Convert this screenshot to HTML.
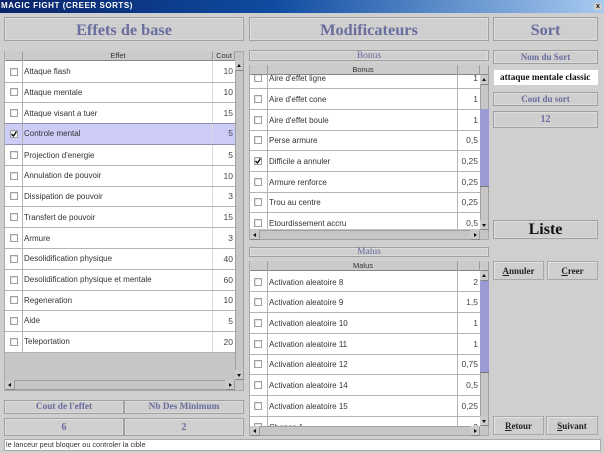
<!DOCTYPE html>
<html><head><meta charset="utf-8"><style>
html,body{margin:0;padding:0}
body{width:604px;height:453px;overflow:hidden;background:#cfcfcf;position:relative;font-family:"Liberation Sans",sans-serif;filter:blur(.35px)}
div{position:absolute;box-sizing:border-box}
.b{border:1px solid #a0a0a0;box-shadow:inset 1px 1px 0 #dedede,inset -1px -1px 0 #dadada;background:#cfcfcf;text-align:center;font-family:"Liberation Serif",serif;font-weight:bold;color:#6a6d9e}
.hd{background:#cbcbcb;border:1px solid #cbcbcb;border-bottom-color:#858585;border-right-color:#9a9a9a;font-size:7.5px;line-height:8px;text-align:center;color:#333}
.w{background:#fff}
.l{font-size:8px;line-height:10px;color:#333;white-space:nowrap}
.m{margin-top:1px}
.n{font-size:8.5px;line-height:10px;color:#444;text-align:right;white-space:nowrap}
.c{width:8px;height:8px;border:1px solid #a0a0a0;background:#fff;box-shadow:inset 1px 1px 0 #e4e4e4}
.line{background:#b4b4b4}
.sb{background:#c6c6c6;border:1px solid #a0a0a0}
.btn{border:1px solid #a8a8a8;box-shadow:inset 1px 1px 0 #e4e4e4;color:#222;text-align:center;font-family:"Liberation Serif",serif;font-weight:bold;font-size:9px}
.t{width:0;height:0}
</style></head><body>

<div style="left:0;top:0;width:604px;height:13px;background:linear-gradient(90deg,#0a246a,#0f4ba0 45%,#a6caf0);color:#fff;font:bold 8px/12px 'Liberation Sans',sans-serif;padding-left:1px;letter-spacing:.55px;white-space:nowrap">MAGIC FIGHT (CREER SORTS)</div>
<div style="left:594px;top:3px;width:8px;height:7px;background:#cfcfcf;font:bold 7px/7px 'Liberation Sans',sans-serif;text-align:center;color:#111">x</div>

<div class="b" style="left:4px;top:17px;width:240px;height:24px;font-size:16.3px;line-height:23px">Effets de base</div>
<div class="b" style="left:249px;top:17px;width:240px;height:24px;font-size:16.3px;line-height:23px">Modificateurs</div>
<div class="b" style="left:493px;top:17px;width:105px;height:24px;font-size:16.3px;line-height:23px">Sort</div>

<!-- LEFT TABLE -->
<div style="left:4px;top:51px;width:240px;height:340px;background:#c6c6c6;border:1px solid #aaa"></div>
<div class="hd" style="left:5px;top:51px;width:18px;height:10px"></div>
<div class="hd" style="left:23px;top:51px;width:190px;height:10px">Effet</div>
<div class="hd" style="left:213px;top:51px;width:22px;height:10px">Cout</div>
<div class="w" style="left:5px;top:61px;width:230px;height:291px"></div>
<div style="left:5px;top:124px;width:230px;height:20px;background:#ccccf6"></div>
<div class="line" style="left:22px;top:61px;width:1px;height:291px"></div>
<div class="line" style="left:212px;top:61px;width:1px;height:291px;background:#d8d8d8"></div>
<div class="line" style="left:5px;top:82px;width:230px;height:1px"></div>
<div class="line" style="left:5px;top:102px;width:230px;height:1px"></div>
<div class="line" style="left:5px;top:123px;width:230px;height:1px;background:#8f8fb5"></div>
<div class="line" style="left:5px;top:144px;width:230px;height:1px;background:#8f8fb5"></div>
<div class="line" style="left:5px;top:165px;width:230px;height:1px"></div>
<div class="line" style="left:5px;top:186px;width:230px;height:1px"></div>
<div class="line" style="left:5px;top:206px;width:230px;height:1px"></div>
<div class="line" style="left:5px;top:227px;width:230px;height:1px"></div>
<div class="line" style="left:5px;top:248px;width:230px;height:1px"></div>
<div class="line" style="left:5px;top:269px;width:230px;height:1px"></div>
<div class="line" style="left:5px;top:290px;width:230px;height:1px"></div>
<div class="line" style="left:5px;top:310px;width:230px;height:1px"></div>
<div class="line" style="left:5px;top:331px;width:230px;height:1px"></div>
<div class="line" style="left:5px;top:352px;width:230px;height:1px"></div>

<div class="c" style="left:10px;top:68px"></div><div class="l" style="left:24px;top:67px">Attaque flash</div><div class="n" style="left:205px;top:66px;width:28px">10</div>
<div class="c" style="left:10px;top:88px"></div><div class="l" style="left:24px;top:88px">Attaque mentale</div><div class="n" style="left:205px;top:87px;width:28px">10</div>
<div class="c" style="left:10px;top:109px"></div><div class="l" style="left:24px;top:109px">Attaque visant a tuer</div><div class="n" style="left:205px;top:108px;width:28px">15</div>
<div class="c" style="left:10px;top:130px"><svg width="6" height="6" style="display:block"><path d="M0.5 3L2.5 5L5.5 0.5" stroke="#111" stroke-width="1.4" fill="none"/></svg></div><div class="l" style="left:24px;top:129px">Controle mental</div><div class="n" style="left:205px;top:128px;width:28px">5</div>
<div class="c" style="left:10px;top:151px"></div><div class="l" style="left:24px;top:151px">Projection d'energie</div><div class="n" style="left:205px;top:150px;width:28px">5</div>
<div class="c" style="left:10px;top:172px"></div><div class="l" style="left:24px;top:171px">Annulation de pouvoir</div><div class="n" style="left:205px;top:171px;width:28px">10</div>
<div class="c" style="left:10px;top:192px"></div><div class="l" style="left:24px;top:192px">Dissipation de pouvoir</div><div class="n" style="left:205px;top:191px;width:28px">3</div>
<div class="c" style="left:10px;top:213px"></div><div class="l" style="left:24px;top:213px">Transfert de pouvoir</div><div class="n" style="left:205px;top:212px;width:28px">15</div>
<div class="c" style="left:10px;top:234px"></div><div class="l" style="left:24px;top:234px">Armure</div><div class="n" style="left:205px;top:233px;width:28px">3</div>
<div class="c" style="left:10px;top:255px"></div><div class="l" style="left:24px;top:254px">Desolidification physique</div><div class="n" style="left:205px;top:254px;width:28px">40</div>
<div class="c" style="left:10px;top:276px"></div><div class="l" style="left:24px;top:275px">Desolidification physique et mentale</div><div class="n" style="left:205px;top:275px;width:28px">60</div>
<div class="c" style="left:10px;top:296px"></div><div class="l" style="left:24px;top:296px">Regeneration</div><div class="n" style="left:205px;top:295px;width:28px">10</div>
<div class="c" style="left:10px;top:317px"></div><div class="l" style="left:24px;top:316px">Aide</div><div class="n" style="left:205px;top:316px;width:28px">5</div>
<div class="c" style="left:10px;top:338px"></div><div class="l" style="left:24px;top:337px">Teleportation</div><div class="n" style="left:205px;top:337px;width:28px">20</div>

<div class="sb" style="left:235px;top:61px;width:9px;height:319px"></div>
<div class="hd" style="left:235px;top:61px;width:9px;height:10px"></div>
<div class="t" style="left:237px;top:64px;border:2.5px solid transparent;border-bottom:3px solid #111;border-top:0"></div>
<div class="hd" style="left:235px;top:370px;width:9px;height:10px"></div>
<div class="t" style="left:237px;top:374px;border:2.5px solid transparent;border-top:3px solid #111;border-bottom:0"></div>
<div class="sb" style="left:5px;top:380px;width:230px;height:10px"></div>
<div class="hd" style="left:5px;top:380px;width:10px;height:10px"></div>
<div class="t" style="left:8px;top:383px;border:2.5px solid transparent;border-right:3px solid #111;border-left:0"></div>
<div class="hd" style="left:225px;top:380px;width:10px;height:10px"></div>
<div class="t" style="left:229px;top:383px;border:2.5px solid transparent;border-left:3px solid #111;border-right:0"></div>

<div class="b" style="left:4px;top:400px;width:120px;height:14px;font-size:9.3px;line-height:13px">Cout de l'effet</div>
<div class="b" style="left:124px;top:400px;width:120px;height:14px;font-size:9.3px;line-height:13px">Nb Des Minimum</div>
<div class="b" style="left:4px;top:418px;width:120px;height:18px;font-size:10px;line-height:17px">6</div>
<div class="b" style="left:124px;top:418px;width:120px;height:18px;font-size:10px;line-height:17px">2</div>

<!-- BONUS -->
<div class="b" style="left:249px;top:50px;width:240px;height:11px;font-size:9.5px;line-height:10px;font-weight:normal">Bonus</div>
<div style="left:249px;top:65px;width:240px;height:175px;background:#c6c6c6;border:1px solid #aaa"></div>
<div class="w" style="left:250px;top:74px;width:230px;height:155px"></div>
<div class="line" style="left:267px;top:74px;width:1px;height:155px"></div>
<div class="line" style="left:457px;top:74px;width:1px;height:155px"></div>
<div class="line" style="left:250px;top:88px;width:230px;height:1px"></div>
<div class="line" style="left:250px;top:109px;width:230px;height:1px"></div>
<div class="line" style="left:250px;top:130px;width:230px;height:1px"></div>
<div class="line" style="left:250px;top:150px;width:230px;height:1px"></div>
<div class="line" style="left:250px;top:171px;width:230px;height:1px"></div>
<div class="line" style="left:250px;top:192px;width:230px;height:1px"></div>
<div class="line" style="left:250px;top:212px;width:230px;height:1px"></div>

<div class="c" style="left:254px;top:74px"></div><div class="l m" style="left:269px;top:73px">Aire d'effet ligne</div><div class="n" style="left:450px;top:73px;width:28px">1</div>
<div class="c" style="left:254px;top:95px"></div><div class="l m" style="left:269px;top:94px">Aire d'effet cone</div><div class="n" style="left:450px;top:94px;width:28px">1</div>
<div class="c" style="left:254px;top:116px"></div><div class="l m" style="left:269px;top:115px">Aire d'effet boule</div><div class="n" style="left:450px;top:115px;width:28px">1</div>
<div class="c" style="left:254px;top:136px"></div><div class="l m" style="left:269px;top:135px">Perse armure</div><div class="n" style="left:450px;top:135px;width:28px">0,5</div>
<div class="c" style="left:254px;top:157px"><svg width="6" height="6" style="display:block"><path d="M0.5 3L2.5 5L5.5 0.5" stroke="#111" stroke-width="1.4" fill="none"/></svg></div><div class="l m" style="left:269px;top:156px">Difficile a annuler</div><div class="n" style="left:450px;top:156px;width:28px">0,25</div>
<div class="c" style="left:254px;top:178px"></div><div class="l m" style="left:269px;top:177px">Armure renforce</div><div class="n" style="left:450px;top:177px;width:28px">0,25</div>
<div class="c" style="left:254px;top:198px"></div><div class="l m" style="left:269px;top:197px">Trou au centre</div><div class="n" style="left:450px;top:197px;width:28px">0,25</div>
<div class="c" style="left:254px;top:219px"></div><div class="l m" style="left:269px;top:218px">Etourdissement accru</div><div class="n" style="left:450px;top:218px;width:28px">0,5</div>

<div class="hd" style="left:250px;top:65px;width:18px;height:10px"></div>
<div class="hd" style="left:268px;top:65px;width:190px;height:10px">Bonus</div>
<div class="hd" style="left:458px;top:65px;width:22px;height:10px"></div>
<div class="hd" style="left:480px;top:65px;width:9px;height:10px"></div>

<div class="sb" style="left:480px;top:75px;width:9px;height:155px"></div>
<div style="left:480px;top:109px;width:9px;height:78px;background:#9c9ad2;border-bottom:1px solid #777"></div>
<div class="hd" style="left:480px;top:75px;width:9px;height:10px"></div>
<div class="t" style="left:482px;top:78px;border:2.5px solid transparent;border-bottom:3px solid #111;border-top:0"></div>
<div class="hd" style="left:480px;top:220px;width:9px;height:10px"></div>
<div class="t" style="left:482px;top:224px;border:2.5px solid transparent;border-top:3px solid #111;border-bottom:0"></div>
<div class="sb" style="left:250px;top:230px;width:230px;height:10px"></div>
<div class="hd" style="left:250px;top:230px;width:10px;height:10px"></div>
<div class="t" style="left:253px;top:233px;border:2.5px solid transparent;border-right:3px solid #111;border-left:0"></div>
<div class="hd" style="left:470px;top:230px;width:10px;height:10px"></div>
<div class="t" style="left:474px;top:233px;border:2.5px solid transparent;border-left:3px solid #111;border-right:0"></div>

<!-- MALUS -->
<div class="b" style="left:249px;top:247px;width:240px;height:10px;font-size:9.5px;line-height:9px;font-weight:normal">Malus</div>
<div style="left:249px;top:261px;width:240px;height:175px;background:#c6c6c6;border:1px solid #aaa"></div>
<div class="w" style="left:250px;top:271px;width:230px;height:155px"></div>
<div class="line" style="left:267px;top:271px;width:1px;height:155px"></div>
<div class="line" style="left:457px;top:271px;width:1px;height:155px"></div>
<div class="line" style="left:250px;top:291px;width:230px;height:1px"></div>
<div class="line" style="left:250px;top:312px;width:230px;height:1px"></div>
<div class="line" style="left:250px;top:333px;width:230px;height:1px"></div>
<div class="line" style="left:250px;top:354px;width:230px;height:1px"></div>
<div class="line" style="left:250px;top:374px;width:230px;height:1px"></div>
<div class="line" style="left:250px;top:395px;width:230px;height:1px"></div>
<div class="line" style="left:250px;top:416px;width:230px;height:1px"></div>

<div class="hd" style="left:250px;top:261px;width:18px;height:10px"></div>
<div class="hd" style="left:268px;top:261px;width:190px;height:10px">Malus</div>
<div class="hd" style="left:458px;top:261px;width:22px;height:10px"></div>
<div class="hd" style="left:480px;top:261px;width:9px;height:10px"></div>

<div class="c" style="left:254px;top:278px"></div><div class="l m" style="left:269px;top:277px">Activation aleatoire 8</div><div class="n" style="left:450px;top:277px;width:28px">2</div>
<div class="c" style="left:254px;top:298px"></div><div class="l m" style="left:269px;top:297px">Activation aleatoire 9</div><div class="n" style="left:450px;top:297px;width:28px">1,5</div>
<div class="c" style="left:254px;top:319px"></div><div class="l m" style="left:269px;top:318px">Activation aleatoire 10</div><div class="n" style="left:450px;top:318px;width:28px">1</div>
<div class="c" style="left:254px;top:340px"></div><div class="l m" style="left:269px;top:339px">Activation aleatoire 11</div><div class="n" style="left:450px;top:339px;width:28px">1</div>
<div class="c" style="left:254px;top:360px"></div><div class="l m" style="left:269px;top:359px">Activation aleatoire 12</div><div class="n" style="left:450px;top:359px;width:28px">0,75</div>
<div class="c" style="left:254px;top:381px"></div><div class="l m" style="left:269px;top:380px">Activation aleatoire 14</div><div class="n" style="left:450px;top:380px;width:28px">0,5</div>
<div class="c" style="left:254px;top:402px"></div><div class="l m" style="left:269px;top:401px">Activation aleatoire 15</div><div class="n" style="left:450px;top:401px;width:28px">0,25</div>
<div class="c" style="left:254px;top:423px"></div><div class="l m" style="left:269px;top:422px">Chance 1</div><div class="n" style="left:450px;top:422px;width:28px">2</div>

<div class="sb" style="left:480px;top:271px;width:9px;height:155px"></div>
<div style="left:480px;top:281px;width:9px;height:92px;background:#9c9ad2;border-bottom:1px solid #777"></div>
<div class="hd" style="left:480px;top:271px;width:9px;height:10px"></div>
<div class="t" style="left:482px;top:274px;border:2.5px solid transparent;border-bottom:3px solid #111;border-top:0"></div>
<div class="hd" style="left:480px;top:416px;width:9px;height:10px"></div>
<div class="t" style="left:482px;top:420px;border:2.5px solid transparent;border-top:3px solid #111;border-bottom:0"></div>
<div class="sb" style="left:250px;top:426px;width:230px;height:10px"></div>
<div class="hd" style="left:250px;top:426px;width:10px;height:10px"></div>
<div class="t" style="left:253px;top:429px;border:2.5px solid transparent;border-right:3px solid #111;border-left:0"></div>
<div class="hd" style="left:470px;top:426px;width:10px;height:10px"></div>
<div class="t" style="left:474px;top:429px;border:2.5px solid transparent;border-left:3px solid #111;border-right:0"></div>

<!-- RIGHT -->
<div class="b" style="left:493px;top:50px;width:105px;height:14px;font-size:9px;line-height:13px">Nom du Sort</div>
<div class="w" style="left:494px;top:70px;width:104px;height:15px;font:bold 9.2px/15px 'Liberation Serif',serif;color:#111;padding-left:6px;white-space:nowrap;overflow:hidden">attaque mentale classic</div>
<div class="b" style="left:493px;top:92px;width:105px;height:14px;font-size:9px;line-height:13px">Cout du sort</div>
<div class="b" style="left:493px;top:111px;width:105px;height:17px;font-size:10px;line-height:16px">12</div>
<div class="b" style="left:493px;top:220px;width:105px;height:19px;font-size:16px;line-height:18px;color:#111">Liste</div>
<div class="btn" style="left:493px;top:261px;width:51px;height:19px;line-height:18px"><u>A</u>nnuler</div>
<div class="btn" style="left:547px;top:261px;width:51px;height:19px;line-height:18px"><u>C</u>reer</div>
<div class="btn" style="left:493px;top:416px;width:51px;height:19px;line-height:18px"><u>R</u>etour</div>
<div class="btn" style="left:546px;top:416px;width:52px;height:19px;line-height:18px"><u>S</u>uivant</div>

<div class="w" style="left:4px;top:439px;width:597px;height:12px;border:1px solid #aaa;font-size:7.3px;line-height:10px;color:#333;padding-left:1px">le lanceur peut bloquer ou controler la cible</div>
</body></html>
